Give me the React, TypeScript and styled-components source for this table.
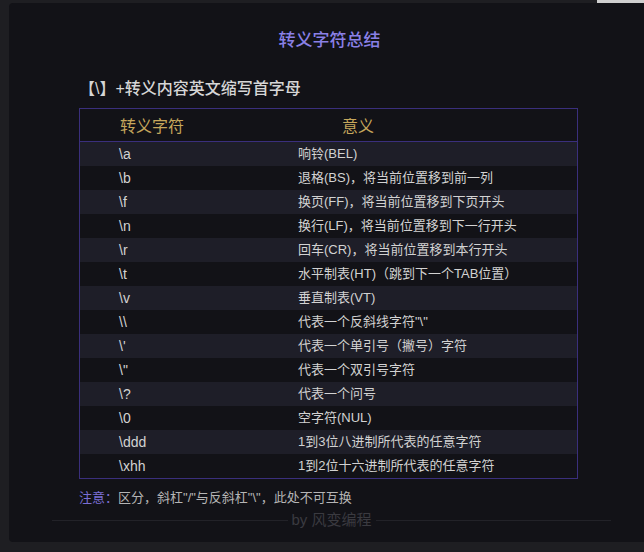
import React from 'react';
import styled, { createGlobalStyle } from 'styled-components';

const rows: [string, string][] = [
  ['\\a', '响铃(BEL)'],
  ['\\b', '退格(BS)，将当前位置移到前一列'],
  ['\\f', '换页(FF)，将当前位置移到下页开头'],
  ['\\n', '换行(LF)，将当前位置移到下一行开头'],
  ['\\r', '回车(CR)，将当前位置移到本行开头'],
  ['\\t', '水平制表(HT)（跳到下一个TAB位置）'],
  ['\\v', '垂直制表(VT)'],
  ['\\\\', '代表一个反斜线字符"\\"'],
  ["\\'", '代表一个单引号（撇号）字符'],
  ['\\"', '代表一个双引号字符'],
  ['\\?', '代表一个问号'],
  ['\\0', '空字符(NUL)'],
  ['\\ddd', '1到3位八进制所代表的任意字符'],
  ['\\xhh', '1到2位十六进制所代表的任意字符'],
];

export default function App(): React.ReactElement {
  return (
    <>
      <GlobalStyle />
      <Page>
        <TopStrip>
          <ScrollThumb />
        </TopStrip>
        <Card>
          <Title>转义字符总结</Title>
          <Subtitle>【\】+转义内容英文缩写首字母</Subtitle>
          <Table>
            <HeadRow>
              <HeadCell $indent={40}>转义字符</HeadCell>
              <HeadCell $indent={44}>意义</HeadCell>
            </HeadRow>
            {rows.map(([code, meaning], i) => (
              <Row key={code} $odd={i % 2 === 0}>
                <CodeCell>{code}</CodeCell>
                <MeaningCell>{meaning}</MeaningCell>
              </Row>
            ))}
          </Table>
          <Note>
            <NoteLabel>注意：</NoteLabel>区分，斜杠"/"与反斜杠"\"，此处不可互换
          </Note>
          <Footer>
            <FooterLine />
            <FooterText>by 风变编程</FooterText>
            <FooterLine />
          </Footer>
        </Card>
      </Page>
    </>
  );
}

const GlobalStyle = createGlobalStyle`
  html, body {
    margin: 0;
    padding: 0;
    background: #1e1e22;
    overflow: hidden;
  }
  body {
    font-family: "Liberation Sans", "Noto Sans CJK SC", sans-serif;
  }
`;

const Page = styled.div`
  width: 644px;
  height: 552px;
  background: #1e1e22;
  display: flex;
  flex-direction: column;
`;

const TopStrip = styled.div`
  height: 3px;
  display: flex;
  justify-content: flex-end;
`;

const ScrollThumb = styled.div`
  width: 47px;
  height: 3px;
  background: #cfcfcf;
`;

const Card = styled.div`
  margin-left: 9px;
  width: 641px;
  height: 539px;
  box-sizing: border-box;
  background: #121217;
  border-radius: 4px;
  padding-top: 26px;
  display: flex;
  flex-direction: column;
`;

const Title = styled.div`
  text-align: center;
  font-size: 17px;
  line-height: 24px;
  font-weight: 500;
  color: #8a80e6;
`;

const Subtitle = styled.div`
  margin: 25px 0 0 70px;
  font-size: 16px;
  line-height: 22px;
  font-weight: 500;
  color: #d6d6d6;
`;

const Table = styled.div`
  margin: 8px 0 0 70px;
  width: 499px;
  box-sizing: border-box;
  border: 1px solid #3a2f7c;
`;

const HeadRow = styled.div`
  display: grid;
  grid-template-columns: 218px 1fr;
  height: 32px;
  border-bottom: 1px solid #3a2f7c;
`;

const HeadCell = styled.div<{ $indent: number }>`
  padding: 8px 0 4px ${(p) => p.$indent}px;
  font-size: 16px;
  line-height: 20px;
  color: #c6a75c;
`;

const Row = styled.div<{ $odd: boolean }>`
  display: grid;
  grid-template-columns: 218px 1fr;
  height: 24px;
  align-items: center;
  background: ${(p) => (p.$odd ? '#1e1e28' : '#121217')};
  font-size: 13px;
  line-height: 18px;
  color: #d2d2d2;
`;

const CodeCell = styled.div`
  padding-left: 39px;
  font-size: 14px;
`;

const MeaningCell = styled.div`
  white-space: nowrap;
`;

const Note = styled.div`
  margin: 9px 0 0 70px;
  font-size: 13px;
  line-height: 20px;
  color: #b5b5b5;
`;

const NoteLabel = styled.span`
  color: #7b6fd4;
`;

const Footer = styled.div`
  margin: 2px 39px 0 43px;
  height: 20px;
  display: flex;
  align-items: center;
  gap: 4px;
`;

const FooterLine = styled.div`
  flex: 1;
  height: 1px;
  background: #222228;
`;

const FooterText = styled.div`
  font-size: 15px;
  line-height: 20px;
  color: #3a3a40;
`;
